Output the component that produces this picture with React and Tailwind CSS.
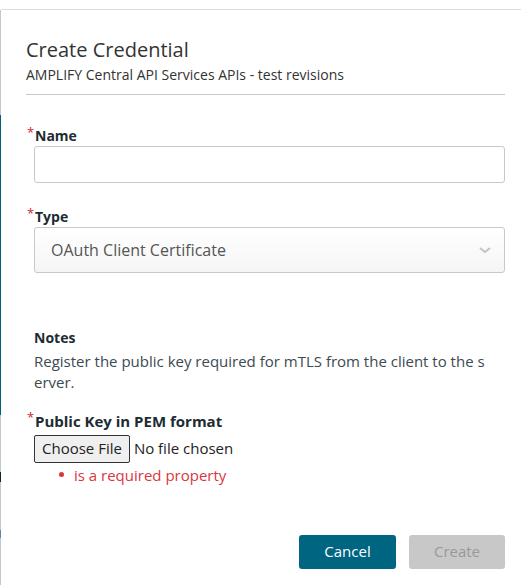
import React from 'react';

function Label({ children, required, big }) {
    return (
        <div className="flex items-start">
            {required && <span className="text-[#d0262f] text-[13px] leading-none mt-[1px] mr-[1px] w-[7px] -ml-[7px]">*</span>}
            <span className={`font-bold text-[#1d2b33] ${big ? 'text-[15px]' : 'text-[14px]'}`}>{children}</span>
        </div>
    );
}

function App() {
    return (
        <div className="w-[521px] h-[585px] bg-white flex overflow-hidden" style={{ fontFamily: '"Open Sans", "Noto Sans", sans-serif' }}>
            <div className="w-[1px] flex flex-col shrink-0">
                <div className="h-[10px] bg-white" />
                <div className="h-[105px] bg-[#c4c8ca]" />
                <div className="h-[300px] bg-[#00627a]" />
                <div className="h-[57px] bg-[#c4c8ca]" />
                <div className="h-[10px] bg-[#0d2630]" />
                <div className="h-[48px] bg-[#c4c8ca]" />
                <div className="h-[8px] bg-[#5b8aa0]" />
                <div className="flex-1 bg-[#c4c8ca]" />
            </div>
            <div className="flex-1 flex flex-col">
                <div className="h-[10px] border-b border-[#dcdcdc] shrink-0" />
                <div className="pl-[25px] pr-[16px] pt-[26px]">
                    <h2 className="text-[20px] leading-[28px] text-[#333]">Create Credential</h2>
                    <p className="text-[14px] leading-[20px] text-[#333] mt-[1px]">AMPLIFY Central API Services APIs - test revisions</p>
                    <hr className="border-[#c8c8c8] mt-[9px]" />
                </div>
                <div className="pl-[33px] pr-[16px]">
                    <div className="mt-[30px]">
                        <Label required>Name</Label>
                        <input className="w-full h-[37px] border border-[#c8c8c8] rounded-[3px] px-3 outline-none" />
                    </div>
                    <div className="mt-[23px]">
                        <Label required>Type</Label>
                        <div className="w-full h-[46px] border border-[#c8c8c8] rounded-[3px] bg-gradient-to-b from-white to-[#f5f5f5] flex items-center justify-between pl-[16px] pr-[12px]">
                            <span className="text-[16px] text-[#555]">OAuth Client Certificate</span>
                            <svg width="14" height="10" viewBox="0 0 14 10" fill="none">
                                <path d="M2 3l5 4 5-4" stroke="#c4c4c4" strokeWidth="2" />
                            </svg>
                        </div>
                    </div>
                    <div className="mt-[55px]">
                        <div className="font-bold text-[14px] text-[#1d2b33] leading-[20px]">Notes</div>
                        <p className="text-[15px] leading-[21px] text-[#3c4a52] break-all mt-[3px] w-[455px]">Register the public key required for mTLS from the client to the server.</p>
                    </div>
                    <div className="mt-[17px]">
                        <Label required big>Public Key in PEM format</Label>
                        <div className="flex items-center mt-[2px]">
                            <button className="h-[28px] px-[7px] border border-[#333] bg-[#efefef] rounded-[2px] text-[15px] text-[#222]">Choose File</button>
                            <span className="text-[15px] text-[#222] ml-[4px]">No file chosen</span>
                        </div>
                        <ul className="pl-[25px]">
                            <li className="flex items-center text-[15px] text-[#d9363e] leading-[24px]">
                                <span className="w-[5px] h-[5px] rounded-full bg-[#d9363e] mr-[10px]" />
                                is a required property
                            </li>
                        </ul>
                    </div>
                    <div className="flex justify-end gap-[13px] mt-[48px]">
                        <button className="w-[97px] h-[34px] rounded-[3px] bg-[#006580] text-white text-[15px]">Cancel</button>
                        <button className="w-[96px] h-[34px] rounded-[3px] bg-[#c8c8c8] text-[#999] text-[15px]">Create</button>
                    </div>
                </div>
            </div>
        </div>
    );
}

export default App;
